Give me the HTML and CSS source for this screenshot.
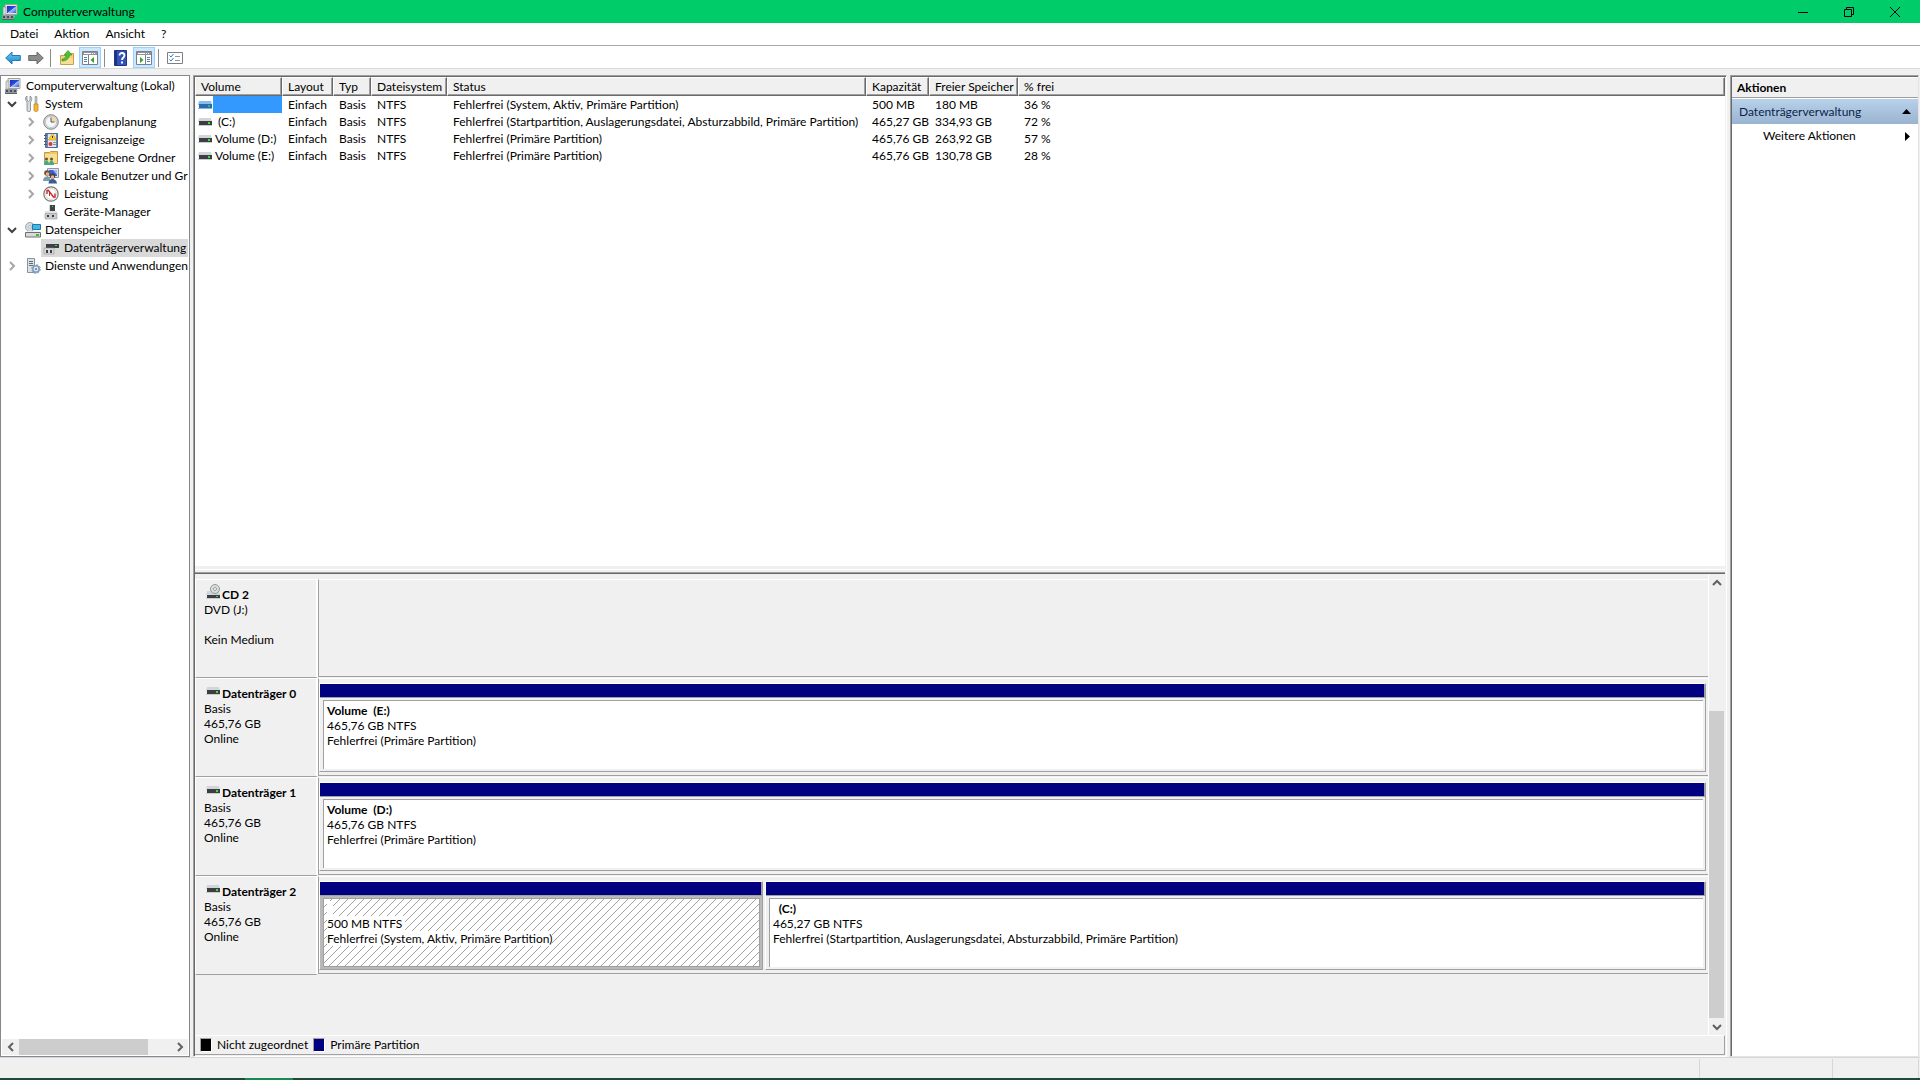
FILE: index.html
```html
<!DOCTYPE html>
<html lang="de">
<head>
<meta charset="UTF-8">
<meta name="viewport" content="width=device-width, initial-scale=1.0">
<title>Computerverwaltung</title>
<link rel="stylesheet" href="styles.css">
</head>
<body>
<svg class="defs" aria-hidden="true">
  <defs>
    <linearGradient id="gBlue" x1="0" y1="0" x2="0" y2="1"><stop offset="0" stop-color="#6cc8f2"/><stop offset="1" stop-color="#1c86cc"/></linearGradient>
    <linearGradient id="gScreen" x1="0" y1="0" x2="1" y2="1"><stop offset="0" stop-color="#1c2fb8"/><stop offset="0.5" stop-color="#2a4fe0"/><stop offset="0.55" stop-color="#a9c4ff"/><stop offset="1" stop-color="#3558d8"/></linearGradient>
  </defs>
  <symbol id="computer" viewBox="0 0 16 16">
    <path d="M3 .5h12v10H3z" fill="#e9e6dc" stroke="#a6a395"/>
    <path d="M5 2h9v7H5z" fill="url(#gScreen)"/>
    <path d="M1 3h3v8H1z" fill="#d9d9d9" stroke="#8d8d8d" stroke-width=".6"/>
    <path d="M7 11h5l1 2H6z" fill="#bdbab0"/>
    <path d="M0 11h12v4.500H0z" fill="#8f9aa0"/>
    <path d="M1 12h2v2H1zM5 12h2v2H5zM9 12h2v2H9z" fill="#474f55"/>
    <path d="M0 15h12v1H0z" fill="#5c6469"/>
  </symbol>
  <symbol id="back" viewBox="0 0 16 16">
    <path d="M.7 8 7 2v3.500h8.300v5H7V14z" fill="url(#gBlue)" stroke="#2678b4"/>
  </symbol>
  <symbol id="forward" viewBox="0 0 16 16">
    <path d="M15.300 8 9 2v3.500H.7v5H9V14z" fill="#8c8c8c" stroke="#6b6b6b"/>
  </symbol>
  <symbol id="folderup" viewBox="0 0 16 16">
    <path d="M1.500 5.500h6l1-2h6v11h-13z" fill="#f2cf78" stroke="#c9a04a"/>
    <path d="M2 8h12v6H2z" fill="#f7dd96"/>
    <path d="M3 9c3 0 4-2 4-4H5l4-4.500L13 5h-2.500C10.500 8.500 7 11 3 11z" fill="#4fc02e" stroke="#2f8d1b" stroke-width=".6"/>
  </symbol>
  <symbol id="paneleft" viewBox="0 0 16 14">
    <path d="M.5.5h15v13H.5z" fill="#fff" stroke="#7c8085"/>
    <path d="M1 1h14v3H1z" fill="#8f959b"/><path d="M2 2h7v1H2z" fill="#fff"/><path d="M10 2h1v1h-1zM12 2h1v1h-1z" fill="#fff"/>
    <path d="M6 4h1v9H6z" fill="#7c8085"/><path d="M2 6h3v1H2zM2 8h3v1H2zM2 10h3v1H2z" fill="#4d7fae"/>
    <path d="M12 6v6L8.500 9z" fill="#36a520"/>
  </symbol>
  <symbol id="paneright" viewBox="0 0 16 14">
    <path d="M.5.5h15v13H.5z" fill="#fff" stroke="#7c8085"/>
    <path d="M1 1h14v3H1z" fill="#8f959b"/><path d="M2 2h7v1H2z" fill="#fff"/><path d="M10 2h1v1h-1zM12 2h1v1h-1z" fill="#fff"/>
    <path d="M9 4h1v9H9z" fill="#7c8085"/><path d="M11 6h3v1h-3zM11 8h3v1h-3zM11 10h3v1h-3z" fill="#4d7fae"/>
    <path d="M4 6v6l3.500-3z" fill="#36a520"/>
  </symbol>
  <symbol id="help" viewBox="0 0 16 16">
    <path d="M1.500.5h12v15h-12z" fill="#3353b5" stroke="#1d3585"/><path d="M2 1h2v14H2z" fill="#1c3484"/>
    <path d="M6.500 5.500c0-3.500 5-3.200 5 0 0 2-2.500 2-2.500 4.500" fill="none" stroke="#fff" stroke-width="1.800"/>
    <path d="M8 11.500h2v2H8z" fill="#fff"/>
  </symbol>
  <symbol id="checklist" viewBox="0 0 16 12">
    <path d="M.5.5h15v11H.5z" fill="#fff" stroke="#7c8085"/>
    <path d="M2.500 3.500 4 5l2.500-3M2.500 7.500 4 9l2.500-3" fill="none" stroke="#2d7bd0"/>
    <path d="M8 4h5v1H8zM8 8h5v1H8z" fill="#8f959b"/>
  </symbol>
  <symbol id="tools" viewBox="0 0 16 16">
    <path d="M2 0v4l1.500 1.500L5 4V0c2 1 2.500 4 .5 6v8.500c0 1.500-3.500 1.500-3.500 0V6C0 4 0 1 2 0z" fill="#d8dadc" stroke="#7c8084" stroke-width=".8"/>
    <path d="M10 .5h2v7h-2z" fill="#c3c7ca" stroke="#85898d" stroke-width=".6"/>
    <path d="M9 8h4v6c0 2-4 2-4 0z" fill="#f2b632" stroke="#c08213" stroke-width=".7"/>
  </symbol>
  <symbol id="clock" viewBox="0 0 16 16">
    <circle cx="8" cy="8" r="7.300" fill="#d5d5d5" stroke="#868686"/><circle cx="8" cy="8" r="5.500" fill="#f3f8fd" stroke="#aaa" stroke-width=".5"/>
    <path d="M8 8V2.600A5.400 5.400 0 0 1 13.400 8z" fill="#f5d9a4"/>
    <path d="M8 3.500V8h3.500" fill="none" stroke="#555"/>
  </symbol>
  <symbol id="events" viewBox="0 0 16 16">
    <path d="M2.500 1.500h12v14h-12z" fill="#6f87b0" stroke="#526a91"/><path d="M5 2h8v13H5z" fill="#dfe6f2"/>
    <path d="M1 3h3v1H1zM1 6h3v1H1zM1 9h3v1H1zM1 12h3v1H1z" fill="#4c5b73"/>
    <path d="M9.500 1.500 13.500 8h-8z" fill="#ffd22f" stroke="#c39406" stroke-width=".6"/><path d="M9 4h1v2H9z" fill="#333"/>
    <circle cx="7.500" cy="12" r="2" fill="#d63b34"/><path d="M10 10h3v1h-3zM10 12h3v1h-3z" fill="#7c95ba"/>
  </symbol>
  <symbol id="shared" viewBox="0 0 16 16">
    <path d="M1.500 2.500h5l1-1h7v12h-13z" fill="#efc765" stroke="#c49a3e"/><path d="M2 4h12v9H2z" fill="#f8dd95"/>
    <circle cx="3.500" cy="9" r="1.500" fill="#69503a"/><circle cx="8.500" cy="9" r="1.500" fill="#69503a"/>
    <path d="M1 15c0-6 5-6 5 0z" fill="#3fab87"/><path d="M6 15c0-6 5-6 5 0z" fill="#3fab87"/>
  </symbol>
  <symbol id="users" viewBox="0 0 16 16">
    <path d="M4.500.5h11v9h-11z" fill="#dfe3ea" stroke="#8e97a6"/><path d="M6 2h8v6H6z" fill="#3a62d6"/><path d="M10 2h4v5z" fill="#9db9f7"/>
    <circle cx="4" cy="5" r="2.800" fill="#6b5138"/><circle cx="4.500" cy="6" r="1.700" fill="#e6b88e"/>
    <path d="M0 13c0-6 7-6 8 0z" fill="#7c9da7"/>
    <circle cx="9.500" cy="8" r="2.700" fill="#54402e"/><circle cx="9.500" cy="9" r="1.700" fill="#e6b88e"/><path d="M5.500 15.500c0-6 8-6 8.500 0z" fill="#385d9b"/>
  </symbol>
  <symbol id="perf" viewBox="0 0 16 16">
    <circle cx="8" cy="8" r="7.200" fill="#fff" stroke="#777" stroke-width="1.200"/><circle cx="8" cy="8" r="5.400" fill="none" stroke="#aaa" stroke-width=".5"/>
    <path d="M4 8V4.500h1.500L10.500 11H12V7.500" fill="none" stroke="#d12727" stroke-width="1.400"/><path d="M6.500 10V5.500" stroke="#d12727"/>
  </symbol>
  <symbol id="device" viewBox="0 0 16 16">
    <path d="M6 1l2-.5v7H6z" fill="#d7d9db"/><path d="M7 1h5v7H7z" fill="#3f4346"/><path d="M9 2h1v1H9z" fill="#3bea3b"/>
    <path d="M2 7h12v3H2z" fill="#e3e3e3"/><path d="M2 9.500h12V15H2z" fill="#cacdd0" stroke="#888" stroke-width=".5"/>
    <path d="M4 11h2v2H4zM9 11h2v2H9z" fill="#393d40"/>
  </symbol>
  <symbol id="storage" viewBox="0 0 16 16">
    <circle cx="5" cy="5" r="4.500" fill="#d6dde3" stroke="#8c969d" stroke-width=".8"/><circle cx="5" cy="5" r="1.400" fill="#fff" stroke="#8c969d" stroke-width=".6"/>
    <path d="M7.500 2.500h8v5h-8z" fill="#45b6e6" stroke="#1f79a8"/>
    <path d="M2 9h12l1.500 2H.5z" fill="#eee"/><path d="M.5 10.500h15v4.500H.5z" fill="#d9d9d9" stroke="#707070"/><path d="M11 12h3v2h-3z" fill="#3ac12f"/>
  </symbol>
  <symbol id="diskmgmt" viewBox="0 0 16 16">
    <path d="M4 2h11l1 2H3z" fill="#d7d9db"/><path d="M3 4h13v4H3z" fill="#3d4144"/><path d="M12 5h2v1h-2z" fill="#3bea3b"/>
    <path d="M1 8h10v6H1z" fill="#d7d9db" stroke="#8a8a8a" stroke-width=".5"/><path d="M3 10h2v3H3zM7 10h2v3H7z" fill="#393d40"/>
  </symbol>
  <symbol id="services" viewBox="0 0 16 16">
    <path d="M2.500.5h7v14h-7z" fill="#dce2e7" stroke="#87939c"/><path d="M4 3h4v1H4zM4 5h4v1H4zM4 7h4v1H4z" fill="#5c6c78"/>
    <circle cx="11" cy="11" r="3.200" fill="#dce8f2" stroke="#7f9db6" stroke-width="1.600"/><circle cx="11" cy="11" r="4.400" fill="none" stroke="#7f9db6" stroke-dasharray="1.700 1.750"/><circle cx="11" cy="11" r="1" fill="#5c7c98"/>
  </symbol>
  <symbol id="drive" viewBox="0 0 14 8">
    <path d="M1 0h12l1 4H0z" fill="#d3d5d8"/><path d="M1 3h13v4H1z" fill="#3b3f43"/><path d="M0 7h14v1H0z" fill="#c9cbcd"/><path d="M10 4h2v2h-2z" fill="#35e335"/>
  </symbol>
  <symbol id="driveblue" viewBox="0 0 14 8">
    <path d="M1 0h12l1 4H0z" fill="#87bdf0"/><path d="M1 3h13v4H1z" fill="#2c6aa8"/><path d="M0 7h14v1H0z" fill="#78b4ee"/><path d="M10 4h2v2h-2z" fill="#33b586"/>
  </symbol>
  <symbol id="cd" viewBox="0 0 14 15">
    <path d="M1 7h12l1 4H0z" fill="#d3d5d8"/>
    <circle cx="9" cy="5" r="4.500" fill="#d9dddd" stroke="#929999"/><circle cx="9" cy="5" r="1.500" fill="#fff" stroke="#9ba2a2"/>
    <path d="M1 11h13v3H1z" fill="#3b3f43"/><path d="M0 14h14v1H0z" fill="#c9cbcd"/><path d="M10 12h2v1h-2z" fill="#35e335"/>
  </symbol>
  <symbol id="chev" viewBox="0 0 10 10"><path d="M3 1l4 4-4 4" fill="none" stroke="currentColor" stroke-width="2"/></symbol>
</svg>

<header class="titlebar">
  <svg class="icon"><use href="#computer"/></svg>
  <h1>Computerverwaltung</h1>
  <div class="winbuttons">
    <button aria-label="Minimieren"><svg width="10" height="10"><path d="M0 5.500h10" stroke="#000"/></svg></button>
    <button aria-label="Verkleinern"><svg width="10" height="10"><path d="M.5 2.500h7v7h-7zM2.500 2.500v-2h7v7h-2" fill="none" stroke="#000"/></svg></button>
    <button aria-label="Schließen"><svg width="10" height="10"><path d="M0 0l10 10M10 0L0 10" stroke="#000"/></svg></button>
  </div>
</header>

<nav class="menubar">
  <button>Datei</button>
  <button>Aktion</button>
  <button>Ansicht</button>
  <button>?</button>
</nav>

<div class="toolbar">
  <button aria-label="Zurück"><svg class="icon"><use href="#back"/></svg></button>
  <button aria-label="Vorwärts"><svg class="icon"><use href="#forward"/></svg></button>
  <span class="sep"></span>
  <button aria-label="Eine Ebene nach oben"><svg class="icon"><use href="#folderup"/></svg></button>
  <button class="on" aria-label="Konsolenstruktur"><svg class="icon"><use href="#paneleft"/></svg></button>
  <span class="sep"></span>
  <button aria-label="Hilfe"><svg class="icon"><use href="#help"/></svg></button>
  <button class="on" aria-label="Aktionsbereich"><svg class="icon"><use href="#paneright"/></svg></button>
  <span class="sep"></span>
  <button aria-label="Einstellungen"><svg class="icon"><use href="#checklist"/></svg></button>
</div>

<main class="workspace">
  <aside class="tree">
    <ul>
      <li class="root"><svg class="icon"><use href="#computer"/></svg><span>Computerverwaltung (Lokal)</span></li>
      <li class="group"><svg class="chev open"><use href="#chev"/></svg><svg class="icon"><use href="#tools"/></svg><span>System</span></li>
      <li class="leaf"><svg class="chev"><use href="#chev"/></svg><div class="node"><svg class="icon"><use href="#clock"/></svg><span>Aufgabenplanung</span></div></li>
      <li class="leaf"><svg class="chev"><use href="#chev"/></svg><div class="node"><svg class="icon"><use href="#events"/></svg><span>Ereignisanzeige</span></div></li>
      <li class="leaf"><svg class="chev"><use href="#chev"/></svg><div class="node"><svg class="icon"><use href="#shared"/></svg><span>Freigegebene Ordner</span></div></li>
      <li class="leaf"><svg class="chev"><use href="#chev"/></svg><div class="node"><svg class="icon"><use href="#users"/></svg><span>Lokale Benutzer und Gruppen</span></div></li>
      <li class="leaf"><svg class="chev"><use href="#chev"/></svg><div class="node"><svg class="icon"><use href="#perf"/></svg><span>Leistung</span></div></li>
      <li class="leaf"><svg class="chev"></svg><div class="node"><svg class="icon"><use href="#device"/></svg><span>Geräte-Manager</span></div></li>
      <li class="group"><svg class="chev open"><use href="#chev"/></svg><svg class="icon"><use href="#storage"/></svg><span>Datenspeicher</span></li>
      <li class="leaf selected"><svg class="chev"></svg><div class="node"><svg class="icon"><use href="#diskmgmt"/></svg><span>Datenträgerverwaltung</span></div></li>
      <li class="group"><svg class="chev"><use href="#chev"/></svg><svg class="icon"><use href="#services"/></svg><span>Dienste und Anwendungen</span></li>
    </ul>
    <div class="hscroll">
      <button class="left" aria-label="Nach links"><svg class="chev"><use href="#chev"/></svg></button>
      <div class="track"><div class="thumb"></div></div>
      <button aria-label="Nach rechts"><svg class="chev"><use href="#chev"/></svg></button>
    </div>
  </aside>

  <section class="content">
    <div class="volumes">
      <table>
        <colgroup>
          <col class="c-volume"><col class="c-layout"><col class="c-typ"><col class="c-fs"><col class="c-status"><col class="c-cap"><col class="c-free"><col>
        </colgroup>
        <thead>
          <tr><th>Volume</th><th>Layout</th><th>Typ</th><th>Dateisystem</th><th>Status</th><th>Kapazität</th><th>Freier Speicher</th><th>% frei</th></tr>
        </thead>
        <tbody>
          <tr><td class="name active"><div><svg class="drive"><use href="#driveblue"/></svg><span></span></div></td><td>Einfach</td><td>Basis</td><td>NTFS</td><td>Fehlerfrei (System, Aktiv, Primäre Partition)</td><td>500 MB</td><td>180 MB</td><td>36 %</td></tr>
          <tr><td class="name"><div><svg class="drive"><use href="#drive"/></svg><span>&nbsp;(C:)</span></div></td><td>Einfach</td><td>Basis</td><td>NTFS</td><td>Fehlerfrei (Startpartition, Auslagerungsdatei, Absturzabbild, Primäre Partition)</td><td>465,27 GB</td><td>334,93 GB</td><td>72 %</td></tr>
          <tr><td class="name"><div><svg class="drive"><use href="#drive"/></svg><span>Volume (D:)</span></div></td><td>Einfach</td><td>Basis</td><td>NTFS</td><td>Fehlerfrei (Primäre Partition)</td><td>465,76 GB</td><td>263,92 GB</td><td>57 %</td></tr>
          <tr><td class="name"><div><svg class="drive"><use href="#drive"/></svg><span>Volume (E:)</span></div></td><td>Einfach</td><td>Basis</td><td>NTFS</td><td>Fehlerfrei (Primäre Partition)</td><td>465,76 GB</td><td>130,78 GB</td><td>28 %</td></tr>
        </tbody>
      </table>
    </div>
    <div class="splitter"></div>
    <div class="graph">
      <div class="disks">
        <div class="disk">
          <div class="label">
            <h2><svg class="cd"><use href="#cd"/></svg>CD 2</h2>
            <p>DVD (J:)</p>
            <p>&nbsp;</p>
            <p>Kein Medium</p>
          </div>
          <div class="parts"></div>
        </div>
        <div class="disk">
          <div class="label">
            <h2><svg class="drive"><use href="#drive"/></svg>Datenträger 0</h2>
            <p>Basis</p>
            <p>465,76 GB</p>
            <p>Online</p>
          </div>
          <div class="parts">
            <div class="part"><div class="bar"></div><div class="box"><h3>Volume&nbsp; (E:)</h3><p>465,76 GB NTFS</p><p>Fehlerfrei (Primäre Partition)</p></div></div>
          </div>
        </div>
        <div class="disk">
          <div class="label">
            <h2><svg class="drive"><use href="#drive"/></svg>Datenträger 1</h2>
            <p>Basis</p>
            <p>465,76 GB</p>
            <p>Online</p>
          </div>
          <div class="parts">
            <div class="part"><div class="bar"></div><div class="box"><h3>Volume&nbsp; (D:)</h3><p>465,76 GB NTFS</p><p>Fehlerfrei (Primäre Partition)</p></div></div>
          </div>
        </div>
        <div class="disk">
          <div class="label">
            <h2><svg class="drive"><use href="#drive"/></svg>Datenträger 2</h2>
            <p>Basis</p>
            <p>465,76 GB</p>
            <p>Online</p>
          </div>
          <div class="parts">
            <div class="part hatched" style="flex-grow: 32"><div class="bar"></div><div class="box"><h3>&nbsp;&nbsp;</h3><p>500 MB NTFS&nbsp;</p><p>Fehlerfrei (System, Aktiv, Primäre Partition)</p></div></div>
            <div class="part" style="flex-grow: 68"><div class="bar"></div><div class="box"><h3>&nbsp; (C:)</h3><p>465,27 GB NTFS</p><p>Fehlerfrei (Startpartition, Auslagerungsdatei, Absturzabbild, Primäre Partition)</p></div></div>
          </div>
        </div>
      </div>
      <div class="vscroll">
        <button class="up" aria-label="Nach oben"><svg class="chev"><use href="#chev"/></svg></button>
        <div class="track"><div class="thumb"></div></div>
        <button class="down" aria-label="Nach unten"><svg class="chev"><use href="#chev"/></svg></button>
      </div>
    </div>
    <div class="legend">
      <i class="swatch black"></i><span>Nicht zugeordnet</span>
      <i class="swatch navy"></i><span>Primäre Partition</span>
    </div>
  </section>

  <aside class="actions">
    <h2>Aktionen</h2>
    <button class="heading">Datenträgerverwaltung<svg width="9" height="5"><path d="M0 5h9L4.500 0z"/></svg></button>
    <button class="item">Weitere Aktionen<svg width="5" height="9"><path d="M0 0v9l5-4.500z"/></svg></button>
  </aside>
</main>

<footer class="statusbar"><span></span><span class="s2"></span><span class="s3"></span></footer>
<div class="taskbar"></div>
</body>
</html>
```
FILE: styles.css
```css
* { box-sizing: border-box; }
body { margin: 0; height: 100vh; display: flex; flex-direction: column; overflow: hidden; background: #f0f0f0; color: #000; font: 12px/18px Lato, "Open Sans", sans-serif; }
h1, h2, h3, p, ul { margin: 0; padding: 0; font-size: 12px; }
ul { list-style: none; }
button { border: 0; padding: 0; margin: 0; background: none; font: inherit; color: inherit; }
.defs { position: absolute; width: 0; height: 0; }
.icon { width: 16px; height: 16px; flex: none; }
.drive { width: 14px; height: 8px; flex: none; }
.chev { width: 10px; height: 10px; flex: none; color: #a6a6a6; }

.titlebar { height: 23px; flex: none; display: flex; align-items: center; padding: 0 2px; gap: 5px; background: #00cc6a; }
.titlebar h1 { flex: 1; font-weight: normal; }
.winbuttons { display: flex; }
.winbuttons button { width: 46px; height: 20px; display: flex; align-items: center; justify-content: center; }

.menubar { height: 23px; flex: none; display: flex; align-items: center; padding-left: 2px; background: #fff; border-bottom: 1px solid #a8a8a8; }
.menubar button { padding: 0 8px; }

.toolbar { height: 23px; flex: none; display: flex; align-items: center; gap: 1px; padding: 1px 0 0 2px; background: #fff; border-bottom: 1px solid #d9d9d9; }
.toolbar button { width: 22px; height: 21px; display: flex; align-items: center; justify-content: center; border: 1px solid transparent; }
.toolbar .on { background: #cce8ff; border-color: #99d1ff; }
.sep { width: 1px; height: 18px; margin: 0 4px 0 2px; background: #8c8c8c; }

.workspace { flex: 1; min-height: 0; display: grid; grid-template-columns: 190px 1fr 190px; gap: 3px; padding: 6px 0 0; }

/* tree */
.tree { display: flex; flex-direction: column; justify-content: space-between; overflow: hidden; padding: 1px; background: #fff; border: 1px solid #828790; }
.tree ul { overflow: hidden; white-space: nowrap; }
.tree li { height: 18px; display: flex; align-items: center; gap: 4px; }
.tree .root { padding-left: 3px; gap: 5px; }
.tree .group { padding-left: 5px; }
.tree .group .icon { margin-left: 4px; }
.tree .leaf { padding-left: 24px; gap: 5px; }
.node { flex: 1; height: 18px; display: flex; align-items: center; gap: 5px; padding-left: 2px; }
.selected .node { background: #d9d9d9; }
.open { transform: rotate(90deg); color: #404040; }
.hscroll { display: flex; height: 16px; background: #f0f0f0; }
.hscroll button, .vscroll button { width: 17px; height: 16px; display: flex; align-items: center; justify-content: center; }
.hscroll .chev, .vscroll .chev { color: #606060; }
.hscroll .left .chev { transform: rotate(180deg); }
.track { flex: 1; }
.thumb { background: #cdcdcd; }
.hscroll .thumb { width: 85%; height: 100%; }

/* volume list */
.content { min-width: 0; display: flex; flex-direction: column; border: 1px solid; border-color: #a0a0a0 #fff #fff #a0a0a0; box-shadow: inset 1px 1px #696969; padding: 1px; }
.volumes { flex: 489 1 0; min-height: 0; overflow: hidden; background: #fff; }
.volumes table { width: 100%; table-layout: fixed; border-collapse: separate; border-spacing: 0; }
.c-volume { width: 87px; }
.c-layout { width: 51px; }
.c-typ { width: 38px; }
.c-fs { width: 76px; }
.c-status { width: 419px; }
.c-cap { width: 63px; }
.c-free { width: 89px; }
.volumes th { height: 19px; padding: 0 0 0 5px; font-weight: normal; text-align: left; line-height: 16px; white-space: nowrap; background: #f0f0f0; border: 1px solid; border-color: #fff #696969 #696969 #fff; box-shadow: inset -1px -1px #a0a0a0; }
.volumes td { height: 17px; padding: 0 0 0 6px; line-height: 17px; white-space: nowrap; }
.volumes .name { padding-left: 3px; }
.name div { display: flex; align-items: center; gap: 3px; }
.active span { flex: 1; height: 17px; background: #3399ff; }
.active div { gap: 1px; }
.splitter { height: 8px; flex: none; background: #f0f0f0; border-bottom: 1px solid #696969; box-shadow: inset 0 -1px #a0a0a0, inset 0 3px #f0f0f0, inset 0 4px #fff; }

/* disk graph */
.graph { flex: 461 1 0; min-height: 0; display: flex; }
.disks { flex: 1; min-width: 0; padding-top: 5px; border-right: 1px solid #fff; }
.disk { height: 99px; display: grid; grid-template-columns: 123px 1fr; line-height: 15px; }
.label { padding: 7px 0 0 8px; border-top: 1px solid #fff; border-left: 1px solid #fff; border-right: 2px solid #fff; border-bottom: 1px solid #a0a0a0; }
.label h2 { display: flex; align-items: center; gap: 2px; padding-left: 2px; line-height: 15px; }
.label .drive { align-self: flex-start; margin-top: 1px; }
.cd { width: 14px; height: 15px; flex: none; align-self: flex-start; margin-top: -3px; }
.parts { min-width: 0; height: 98px; display: flex; gap: 2px; padding: 4px 2px 3px 0; border-left: 1px solid #a0a0a0; border-top: 1px solid #fff; border-bottom: 1px solid #a0a0a0; }
.part { flex: 1 1 0; min-width: 0; display: flex; flex-direction: column; border: 1px solid; border-color: #fff #a0a0a0 #a0a0a0 #fff; }
.bar { height: 14px; flex: none; background: #000080; border-bottom: 1px solid #a0a0a0; border-right: 1px solid #a0a0a0; }
.box { flex: 1; margin: 2px 2px 2px 3px; padding: 2px 3px; background: #fff; border-top: 1px solid #a0a0a0; border-left: 1px solid #a0a0a0; white-space: nowrap; }
.box h3 { line-height: 15px; }
.hatched { background: #b9b9b9; }
.hatched .box { border: 1px solid #a0a0a0; background: linear-gradient(135deg, #fff 48%, #a0a0a0 48%, #a0a0a0 52%, #fff 52%) 0 0 / 8px 8px; }
.hatched h3, .hatched p { width: fit-content; background: #fff; }

.vscroll { width: 16px; display: flex; flex-direction: column; }
.vscroll button { width: 15px; height: 17px; }
.vscroll .track { display: flex; flex-direction: column; justify-content: flex-end; }
.vscroll .thumb { width: 15px; height: 72%; }
.up .chev { transform: rotate(-90deg); }
.down .chev { transform: rotate(90deg); }

.legend { height: 20px; flex: none; display: flex; align-items: center; gap: 5px; padding-left: 5px; border-top: 1px solid #fff; border-right: 1px solid #a0a0a0; border-bottom: 1px solid #a0a0a0; }
.swatch { width: 12px; height: 14px; border: 1px solid; border-color: #a0a0a0 #fff #fff #a0a0a0; }
.black { background: #000; }
.navy { background: #000080; }

/* actions */
.actions { margin-right: 1px; display: flex; flex-direction: column; background: #fff; border: 1px solid; border-color: #a0a0a0 #e3e3e3 #e3e3e3 #a0a0a0; box-shadow: inset 1px 1px #696969; padding: 2px 0 0 1px; }
.actions h2 { height: 20px; padding-left: 5px; background: #f0f0f0; border-bottom: 1px solid #a0a0a0; line-height: 20px; }
.actions button { display: flex; align-items: center; justify-content: space-between; height: 25px; padding: 0 7px; }
.actions .heading { margin-top: 1px; background: linear-gradient(#b9d1ea, #99b4d1); color: #0b1f4d; }
.actions .item { height: 24px; padding: 0 8px 0 31px; }

.statusbar { height: 21px; flex: none; display: flex; border-top: 1px solid #d7d7d7; }
.statusbar span { flex: 1; margin-top: 1px; border-right: 1px solid #d7d7d7; }
.statusbar .s2 { flex: none; width: 133px; }
.statusbar .s3 { flex: none; width: 86px; margin-right: 1px; }
.taskbar { height: 2px; flex: none; background: linear-gradient(90deg, transparent 245px, #128c50 245px, #128c50 293px, transparent 293px), #22483a; }
```
